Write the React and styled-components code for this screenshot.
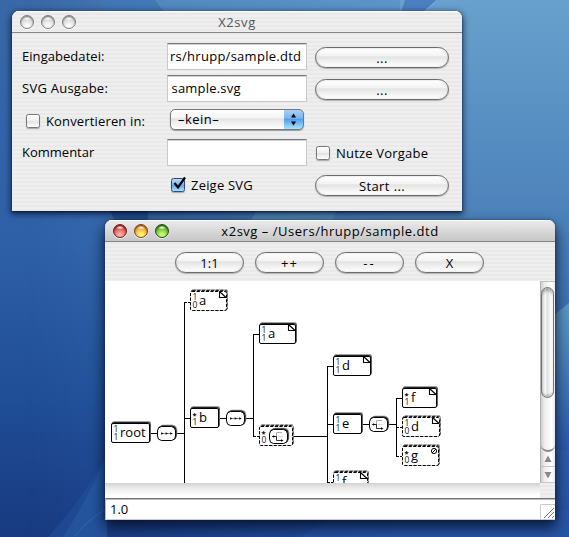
import React from "react";
import styled, { createGlobalStyle, css } from "styled-components";

const Global = createGlobalStyle`
  * { box-sizing: border-box; }
  body { margin: 0; overflow: hidden; }
`;

const stripes = "repeating-linear-gradient(180deg, #efefef 0 2px, #e9e9e9 2px 4px)";
const gel = "linear-gradient(180deg, #ffffff 0%, #f4f4f4 40%, #e3e3e3 47%, #eeeeee 65%, #ffffff 100%)";

const Desktop = styled.main`
  position: relative;
  width: 569px;
  height: 537px;
  overflow: hidden;
  font: 13px/16px "Open Sans", "Noto Sans", sans-serif;
  color: #000;
  background: #2c5ea4;
`;

const Wallpaper = styled.svg`
  display: block;
  width: 569px;
  height: 537px;
`;

const Window = styled.section`
  position: absolute;
  left: ${(p) => p.$x}px;
  top: ${(p) => p.$y}px;
  width: 450px;
  height: ${(p) => p.$h}px;
  display: flex;
  flex-direction: column;
  border-radius: 7px 7px 0 0;
  overflow: hidden;
  background: ${stripes};
`;

const WindowShadow = styled(Window)`
  overflow: visible;
  background: none;
  box-shadow: ${(p) =>
    p.$active
      ? "0 7px 14px 1px rgba(0, 8, 30, 0.75), 0 0 3px rgba(0, 0, 0, 0.4)"
      : "0 2px 6px 1px rgba(0, 10, 35, 0.7), 0 1px 2px rgba(0, 0, 0, 0.5)"};
`;

const TitleBar = styled.header`
  flex: none;
  height: 22px;
  display: grid;
  grid-template-columns: 64px 1fr 64px;
  align-items: center;
  padding: 0 8px;
  border-bottom: 1px solid #858585;
  box-shadow: inset 0 1px 0 #ffffff;
  background: ${(p) => (p.$active ? "linear-gradient(180deg, #ececec, #c6c6c6)" : stripes)};
  color: ${(p) => (p.$active ? "#000" : "#555")};
`;

const Title = styled.h1`
  margin: 0;
  font: inherit;
  text-align: center;
  white-space: nowrap;
  letter-spacing: ${(p) => p.$track || 0}px;
`;

const Lights = styled.div`
  display: flex;
  gap: 7px;
`;

const lightTone = {
  off: ["#fbfbfb", "#cfcfcf", "#7d7d7d"],
  red: ["#ffaaa0", "#d54343", "#6d2021"],
  amber: ["#fff276", "#ee962c", "#81420f"],
  green: ["#c3f576", "#5bad25", "#234f0e"],
};

const Light = styled.span`
  width: 14px;
  height: 14px;
  border-radius: 50%;
  border: 1px solid ${(p) => lightTone[p.$tone][2]};
  background:
    radial-gradient(ellipse 4px 2px at 50% 2.5px, rgba(255, 255, 255, 0.95), rgba(255, 255, 255, 0.1) 100%, transparent),
    radial-gradient(circle at 50% 85%, ${(p) => lightTone[p.$tone][0]} 15%, ${(p) => lightTone[p.$tone][1]} 70%);
  box-shadow: inset 0 1px 1px ${(p) => lightTone[p.$tone][2]}, 0 1px 0 rgba(255, 255, 255, 0.7);
`;

const Form = styled.div`
  display: grid;
  grid-template-columns: 145px 140px 142px;
  grid-auto-rows: 27px;
  row-gap: 5px;
  padding: 10px 0 0 10px;
  align-items: center;
`;

const Label = styled.span`
  white-space: pre;
  padding-bottom: ${(p) => p.$lift || 0}px;
  letter-spacing: ${(p) => p.$track || 0}px;
`;

const Field = styled.div`
  height: 27px;
  display: flex;
  align-items: center;
  padding: 0 0 1px ${(p) => p.$inset || 3.5}px;
  white-space: nowrap;
  background: #fff;
  border: 1px solid #c8c8c8;
  border-top: 1px solid #777;
  box-shadow: inset 0 1px 0 #d5d5d5;
  letter-spacing: ${(p) => p.$track || 0}px;
`;

const Button = styled.button`
  flex: none;
  width: ${(p) => p.$w}px;
  height: 21px;
  padding: 0;
  border: 1.5px solid #6b6b6b;
  border-radius: 11px;
  background: ${gel};
  box-shadow: 0 1px 1px rgba(0, 0, 0, 0.25), inset 0 0 2px rgba(0, 0, 0, 0.2);
  font: inherit;
  line-height: 18px;
  color: #000;
  letter-spacing: ${(p) => p.$track || 0}px;
`;

const ActionCell = styled.div`
  padding: ${(p) => (p.$check ? "0 0 0 9px" : "2px 0 0 8px")};
  display: flex;
`;

const CheckLine = styled.div`
  display: flex;
  align-items: center;
  gap: 6px;
  white-space: nowrap;
  padding-left: ${(p) => p.$indent || 0}px;
  padding-top: ${(p) => p.$drop || 0}px;
`;

const Box = styled.span`
  position: relative;
  flex: none;
  width: 14px;
  height: 14px;
  border-radius: 2.5px;
  border: 1px solid #777;
  background: linear-gradient(180deg, #fff, #f2f2f2 45%, #e2e2e2 52%, #fff);
  box-shadow: 0 1px 1px rgba(0, 0, 0, 0.3);
  ${(p) =>
    p.$on &&
    css`
      border-color: #35477f;
      background: linear-gradient(180deg, #b9d8f6, #8bbef0 40%, #63a9ec 52%, #a4e4ff);
    `}
`;

const Tick = styled.svg`
  position: absolute;
  left: 0;
  top: -3px;
  width: 16px;
  height: 14px;
`;

const Popup = styled.div`
  width: 134px;
  height: 21px;
  margin: -2px 0 0 3px;
  display: flex;
  align-items: stretch;
  justify-content: space-between;
  overflow: hidden;
  border: 1px solid #777;
  border-radius: 5px;
  background: ${gel};
  box-shadow: 0 1px 1px rgba(0, 0, 0, 0.35);
  line-height: 18px;
`;

const PopupText = styled.span`
  padding-left: 7px;
  letter-spacing: 0.45px;
`;

const PopupCap = styled.span`
  width: 20px;
  margin: -1px -1px -1px 0;
  border: 1px solid #2b3f86;
  border-left: 0;
  border-radius: 0 5px 5px 0;
  background: linear-gradient(180deg, #a9cff5, #7db4ee 42%, #559fe9 50%, #a5e6ff);
`;

const PopupArrows = styled.svg`
  display: block;
  width: 20px;
  height: 19px;
`;

const Toolbar = styled.div`
  flex: none;
  height: 39px;
  display: flex;
  align-items: center;
  gap: 11px;
  padding-left: 70px;
  padding-top: 2px;
`;

const View = styled.div`
  flex: none;
  display: grid;
  grid-template-columns: 435px 15px;
  grid-template-rows: 202px 15px;
`;

const Canvas = styled.svg`
  display: block;
  background: #fff;
  width: 435px;
  height: 202px;
`;

const VScroll = styled.div`
  display: flex;
  flex-direction: column;
  border-left: 1px solid #b0b0b0;
  border-top: 1px solid #c0c0c0;
  background: linear-gradient(90deg, #cfcfcf, #ededed 25%, #fff 75%, #e9e9e9);
`;

const Track = styled.div`
  height: 170px;
  padding-top: 5px;
  border-bottom: 2px solid #888;
  border-radius: 0 0 7px 7px;
`;

const Thumb = styled.div`
  width: 13px;
  height: 111px;
  border: 1.5px solid #747474;
  border-radius: 7px;
  background: linear-gradient(90deg, #d2d2d2, #f8f8f8 32%, #dedede 45%, #f3f3f3 70%, #ffffff);
  box-shadow: inset 0 4px 3px -1px rgba(0, 0, 0, 0.28), inset 0 -3px 2px -1px rgba(0, 0, 0, 0.2);
`;

const Arrows = styled.svg`
  width: 14px;
  height: 31px;
`;

const HScroll = styled.div`
  background: linear-gradient(180deg, #d2d2d2, #ececec 35%, #fff 85%);
`;

const Corner = styled.div`
  background: ${stripes};
`;

const Status = styled.footer`
  flex: 1;
  display: flex;
  align-items: center;
  justify-content: space-between;
  padding: 0 0 1px 4px;
  border-top: 1px solid #777;
  border-left: 1px solid #bbb;
  border-bottom: 1px solid #ccc;
  background: #fff;
  box-shadow: inset 0 1px 0 #bbb;
`;

const Grip = styled.svg`
  align-self: flex-end;
  margin-bottom: -1px;
  width: 15px;
  height: 15px;
`;

function Node({ x, y, w, name, hi, lo, dashed, mark = "leaf" }) {
  const dash = dashed ? "3.2 1.4" : undefined;
  const r = x + w;
  return (
    <g>
      <rect x={x + 1.5} y={y - 0.5} width={w - 1} height={20} rx="1.5" fill="#a5a5a5" stroke="#a0a0a0" strokeDasharray={dash} />
      <rect x={x + 1} y={y + 0.5} width={w - 1} height={19.5} rx="1.5" fill="#fff" stroke="#222" strokeDasharray={dash} />
      <rect x={x + 0.5} y={y + 1.5} width={w - 1} height={19} rx="1.5" fill="#fff" stroke="#000" strokeDasharray={dash} />
      {hi === "*" ? (
        <text x={x + 2.5} y={y + 10.5} fontSize="7.5" fontWeight="700">*</text>
      ) : (
        <text x={x + 2.5} y={y + 10} fontSize="8.5" fill="#201418">{hi}</text>
      )}
      <text x={x + 2.5} y={y + 18} fontSize="8.5" fill="#201418">{lo}</text>
      {name && <text x={x + 9} y={y + 15} fontSize="13">{name}</text>}
      {mark === "leaf" && (
        <path d={`M${r - 7.5} ${y + 1.5}V${y + 7.5}H${r - 0.5}M${r - 7.5} ${y + 1.5}L${r - 1} ${y + 7.5}`} fill="none" stroke="#000" strokeWidth="1.1" />
      )}
      {mark === "empty" && (
        <g fill="none" stroke="#000">
          <circle cx={r - 5} cy={y + 6} r="2.6" />
          <path d={`M${r - 7} ${y + 8}L${r - 3} ${y + 4}`} />
        </g>
      )}
    </g>
  );
}

function Pill({ x, y, choice }) {
  const shape = "M4.5 .5H14.5Q18.5 1 18.5 5V10Q18.5 14 14.5 14.5H4.5Q.5 14 .5 10V5Q.5 1 4.5 .5Z";
  return (
    <g transform={`translate(${x} ${y})`}>
      <path d={shape} transform="translate(1.3 -1.3)" fill="#999" stroke="#999" />
      <path d={shape} transform="translate(.6 -.6)" fill="#222" stroke="#222" />
      <path d={shape} fill="#fff" stroke="#000" />
      {choice ? (
        <g fill="none">
          <path d="M7.5 7V3.5H13" stroke="#aaa" />
          <path d="M9 7.5H14" stroke="#ddd" />
          <path d="M3 7.5H8M7.5 7V11.5H13" stroke="#333" />
          <path d="M4.2 6.2L6.5 7.5L4.2 8.8ZM12 10.2L14.5 11.5L12 12.8Z" fill="#000" />
        </g>
      ) : (
        <g>
          <path d="M4 7.5H15.5" stroke="#888" />
          <path d="M4.2 6.2L6.5 7.5L4.2 8.8ZM8.7 6.2L11 7.5L8.7 8.8ZM13.2 6.2L15.5 7.5L13.2 8.8Z" fill="#000" />
        </g>
      )}
    </g>
  );
}

function Diagram() {
  return (
    <Canvas viewBox="105 281 435 202" fontFamily="Open Sans, Noto Sans, sans-serif">
      <g stroke="#000" fill="none">
        <path d="M150 433.5H184.5M184.5 302V483M184 418.5H253.5M253.5 334V436.5M253 334.5H260M294 436.5H327.5M327.5 366V483M327 366.5H334M327 424.5H396.5M396.5 398V456.5M396 398.5H403" />
        <path d="M184 302.5H190M253 436.5H259M396 427.5H402M396 456.5H402M327 482.5H333" strokeDasharray="3 1" />
      </g>
      <Node x={111} y={422} w={39} name="root" hi="1" lo="1" mark="" />
      <Pill x={157} y={426} />
      <Node x={190} y={290} w={37} name="a" hi="1" lo="0" dashed />
      <Node x={190} y={407} w={29} name="b" hi="*" lo="1" mark="" />
      <Pill x={226} y={411} />
      <Node x={259} y={323} w={37} name="a" hi="1" lo="1" />
      <Node x={259} y={425} w={34} hi="*" lo="0" mark="" dashed />
      <Pill x={269} y={429} choice />
      <Node x={333} y={355} w={38} name="d" hi="1" lo="1" />
      <Node x={333} y={413} w={29} name="e" hi="1" lo="1" mark="" />
      <Pill x={369} y={417} choice />
      <Node x={333} y={471} w={35} name="f" hi="1" lo="" dashed />
      <Node x={402} y={387} w={35} name="f" hi="*" lo="1" />
      <Node x={402} y={416} w={38} name="d" hi="1" lo="0" dashed />
      <Node x={402} y={445} w={37} name="g" hi="*" lo="0" mark="empty" dashed />
    </Canvas>
  );
}

function Backdrop() {
  return (
    <Wallpaper viewBox="0 0 569 537" preserveAspectRatio="none">
      <defs>
        <linearGradient id="left" x1="0" y1="0" x2="0" y2="1">
          <stop offset="0" stopColor="#3868a6" />
          <stop offset=".45" stopColor="#2e60a8" />
          <stop offset=".75" stopColor="#1f4d96" />
          <stop offset="1" stopColor="#183a80" />
        </linearGradient>
        <linearGradient id="right" x1="0" y1="0" x2="0" y2="1">
          <stop offset="0" stopColor="#68a1cd" />
          <stop offset=".4" stopColor="#4c82ba" />
          <stop offset=".58" stopColor="#3d72b0" />
          <stop offset="1" stopColor="#2450a0" />
        </linearGradient>
        <linearGradient id="fade">
          <stop offset=".05" stopColor="#000" />
          <stop offset=".7" stopColor="#fff" />
        </linearGradient>
        <linearGradient id="ray" x1="0" y1="0" x2="0" y2="1">
          <stop offset="0" stopColor="#64a4c8" />
          <stop offset="1" stopColor="#2a57a8" />
        </linearGradient>
        <mask id="blend"><rect width="569" height="537" fill="url(#fade)" /></mask>
      </defs>
      <rect width="569" height="537" fill="url(#left)" />
      <rect width="569" height="537" fill="url(#right)" mask="url(#blend)" />
      <path d="M98 0Q104 8 108 16H168Q160 7 155 0Z" fill="#3f78b6" opacity=".7" />
      <path d="M155 0Q160 7 168 16H400V0Z" fill="#568fc4" opacity=".65" />
      <path d="M405 0H437L418 16H400Z" fill="#4c7fc0" />
      <path d="M437 0L420 16" stroke="#91b8dc" opacity=".7" />
      <path d="M109 208H148V222H115Z" fill="#245293" />
      <path d="M250 222L258 208H338L332 222Z" fill="#5594bf" opacity=".75" />
      <path d="M569 303Q560 310 550 319V450H569Z" fill="url(#ray)" opacity=".8" />
      <path d="M48 537Q80 503 107 455V537Z" fill="#2456a0" opacity=".45" />
      <path d="M63 537Q87 500 107 455V537Z" fill="#2c65ad" opacity=".4" />
      <path d="M74 537Q91 516 112 505" fill="none" stroke="#4279b8" opacity=".5" />
      <path d="M300 537L345 510H569V537Z" fill="#2a5cac" opacity=".4" />
    </Wallpaper>
  );
}

function TrafficLights({ tones }) {
  return <Lights>{tones.map((t, i) => <Light key={i} $tone={t} />)}</Lights>;
}

export default function App() {
  return (
    <Desktop>
      <Global />
      <Backdrop />
      <WindowShadow $x={12} $y={11} $h={200} />
      <Window $x={12} $y={11} $h={200}>
        <TitleBar>
          <TrafficLights tones={["off", "off", "off"]} />
          <Title $track={0.6}>X2svg</Title>
        </TitleBar>
        <Form>
          <Label $lift={1} $track={0.05}>Eingabedatei:</Label>
          <Field $track={0.27} $inset={2}>rs/hrupp/sample.dtd</Field>
          <ActionCell><Button $w={134} $track={0.5}>...</Button></ActionCell>

          <Label $lift={1} $track={0.25}>SVG Ausgabe:</Label>
          <Field $track={0.2}>sample.svg</Field>
          <ActionCell><Button $w={134} $track={0.5}>...</Button></ActionCell>

          <CheckLine $indent={4} $drop={1}><Box /><Label $track={0.15}>Konvertieren in:</Label></CheckLine>
          <Popup>
            <PopupText>–kein–</PopupText>
            <PopupCap>
              <PopupArrows viewBox="0 0 20 19">
                <path d="M7 7.5L9.5 3.5L12 7.5ZM7 11.5L9.5 15.5L12 11.5Z" fill="#000" />
              </PopupArrows>
            </PopupCap>
          </Popup>
          <span />

          <Label $lift={1}>Kommentar</Label>
          <Field />
          <ActionCell $check><CheckLine><Box /><Label $track={0.2}>Nutze Vorgabe</Label></CheckLine></ActionCell>

          <span />
          <CheckLine $indent={4}>
            <Box $on>
              <Tick viewBox="0 0 16 14">
                <path d="M2.5 7L6 11.5L13 1.5" fill="none" stroke="#000" strokeWidth="2.2" />
              </Tick>
            </Box>
            <Label $track={0.2}>Zeige SVG</Label>
          </CheckLine>
          <ActionCell><Button $w={134} $track={0.4}>Start ...</Button></ActionCell>
        </Form>
      </Window>

      <WindowShadow $x={105} $y={220} $h={300} $active />
      <Window $x={105} $y={220} $h={300}>
        <TitleBar $active>
          <TrafficLights tones={["red", "amber", "green"]} />
          <Title $track={0.52}>x2svg – /Users/hrupp/sample.dtd</Title>
        </TitleBar>
        <Toolbar>
          <Button $w={69}>1:1</Button>
          <Button $w={69} $track={1}>++</Button>
          <Button $w={69} $track={2}>--</Button>
          <Button $w={69}>X</Button>
        </Toolbar>
        <View>
          <Diagram />
          <VScroll>
            <Track><Thumb /></Track>
            <Arrows viewBox="0 0 14 31">
              <path d="M3.5 10L7 3.5L10.5 10ZM3.5 20L7 26.5L10.5 20Z" fill="#888" />
              <path d="M0 14.5H14M0 30.5H14" stroke="#c8c8c8" />
            </Arrows>
          </VScroll>
          <HScroll />
          <Corner />
        </View>
        <Status>
          <span>1.0</span>
          <Grip viewBox="0 0 15 15">
            <path d="M0.5 15V.5H15" fill="none" stroke="#ccc" />
            <path d="M4 14L14 4M8 14L14 8M12 14L14 12" stroke="#777" />
          </Grip>
        </Status>
      </Window>
    </Desktop>
  );
}
